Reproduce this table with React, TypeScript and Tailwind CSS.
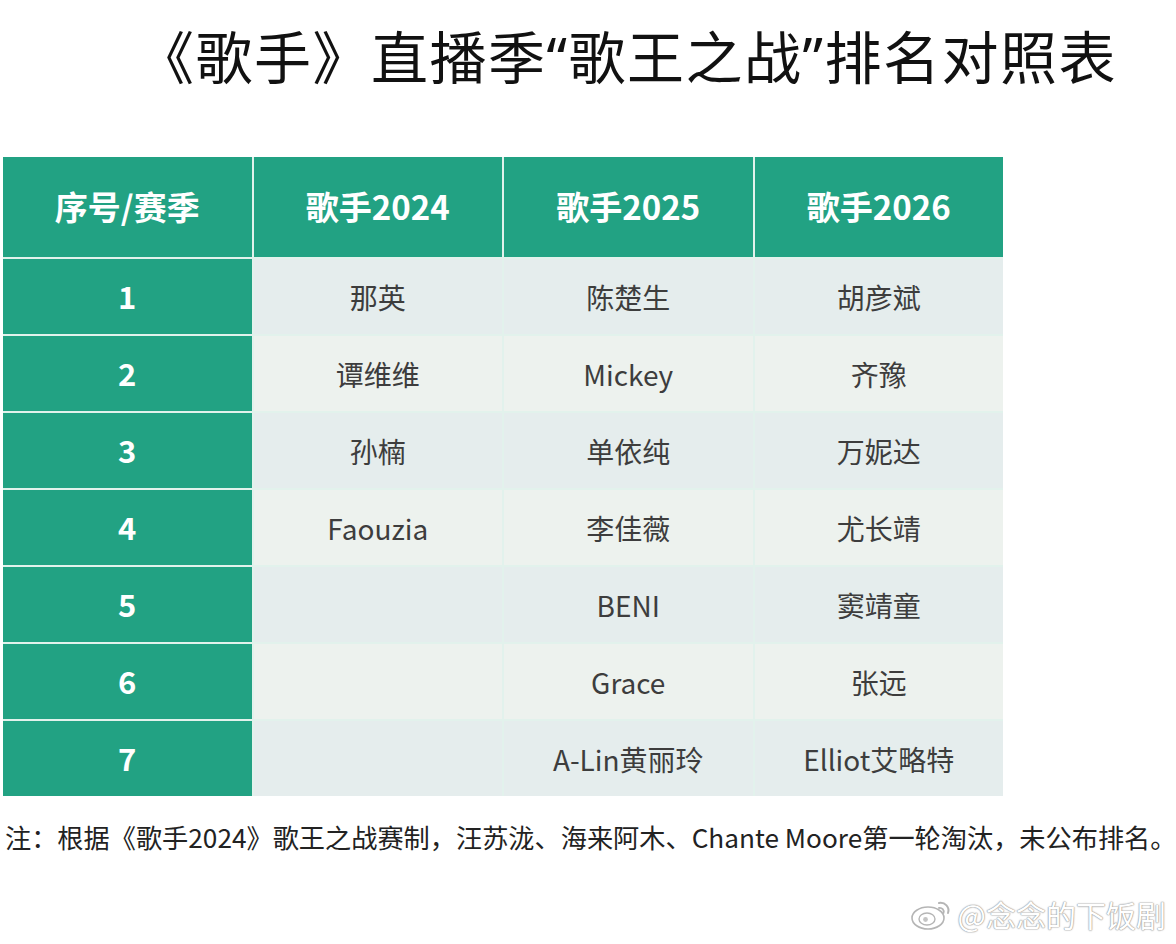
const FONT = { fontFamily: '"Noto Sans CJK SC", "Noto Sans", sans-serif' }
// 标题里的引号用半角字形
const QUOTE = { fontFamily: '"Noto Sans", sans-serif' }

// 列头
const HEADERS = ['序号/赛季', '歌手2024', '歌手2025', '歌手2026']

// 每行：2024 / 2025 / 2026
const ROWS: [string, string, string][] = [
  ['那英', '陈楚生', '胡彦斌'],
  ['谭维维', 'Mickey', '齐豫'],
  ['孙楠', '单依纯', '万妮达'],
  ['Faouzia', '李佳薇', '尤长靖'],
  ['', 'BENI', '窦靖童'],
  ['', 'Grace', '张远'],
  ['', 'A-Lin黄丽玲', 'Elliot艾略特'],
]

function WeiboLogo() {
  return (
    <svg width="44" height="34" viewBox="0 0 44 34" fill="none">
      <ellipse cx="18" cy="21" rx="16" ry="11" fill="#fff" stroke="#b5b5b5" strokeWidth="1.6" />
      <ellipse cx="17" cy="22" rx="8" ry="6" fill="#fff" stroke="#b5b5b5" strokeWidth="1.4" />
      <circle cx="15.5" cy="22.5" r="2.4" fill="#c4c4c4" />
      <path d="M29 6 C35 5 40 10 38 16" stroke="#b5b5b5" strokeWidth="2" strokeLinecap="round" />
      <path d="M29 11 C32 10.5 34.5 13 33.5 16" stroke="#b5b5b5" strokeWidth="1.8" strokeLinecap="round" />
    </svg>
  )
}

export default function App() {
  return (
    <div className="relative h-[944px] w-[1176px] overflow-hidden bg-white" style={FONT}>
      {/* 标题 */}
      <div className="h-[84px] pl-[137px] pt-[24px]">
        <h1 className="h-[60px] whitespace-nowrap text-[57px] font-normal leading-[60px] tracking-[1.5px] text-[#111]">
          《歌手》直播季<span style={QUOTE}>“</span>歌王之战<span style={QUOTE}>”</span>排名对照表
        </h1>
      </div>

      {/* 表格 */}
      <div className="ml-[3px] mt-[73px] grid w-[1000px] grid-cols-4 gap-[2px] bg-[#e2f2ec]">
        {HEADERS.map((h) => (
          <div
            key={h}
            className="flex h-[100px] items-center justify-center bg-[#22a283] text-[33px] font-bold text-white"
          >
            {h}
          </div>
        ))}
        {ROWS.map((row, idx) => (
          <div key={idx} className="contents">
            <div className="flex h-[75px] items-center justify-center bg-[#22a283] text-[31px] font-bold text-white">
              {idx + 1}
            </div>
            {row.map((name, ci) => (
              <div
                key={ci}
                className={
                  'flex h-[75px] items-center justify-center text-[28px] text-[#3d3d3d] ' +
                  (idx % 2 === 0 ? 'bg-[#e5eded]' : 'bg-[#edf2ee]')
                }
              >
                {name}
              </div>
            ))}
          </div>
        ))}
      </div>

      {/* 注释 */}
      <p className="ml-[5px] mt-[25px] whitespace-nowrap text-[26.2px] leading-[32px] text-[#222]">
        注：根据《歌手2024》歌王之战赛制，汪苏泷、海来阿木、Chante Moore第一轮淘汰，未公布排名。
      </p>

      {/* 水印 */}
      <div className="absolute bottom-[12px] right-[10px] flex items-center gap-[4px]">
        <WeiboLogo />
        <span
          className="text-[30px] leading-[36px] text-white"
          style={{ textShadow: '0 0 1px #999, 0 0 1px #999, 0 0 2px #aaa' }}
        >
          @念念的下饭剧
        </span>
      </div>
    </div>
  )
}
